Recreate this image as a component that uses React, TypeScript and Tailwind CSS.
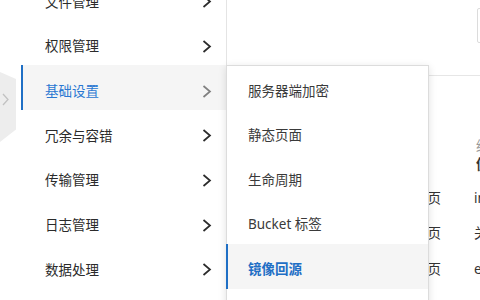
import React from 'react';

const mainItems = ['文件管理', '权限管理', '基础设置', '冗余与容错', '传输管理', '日志管理', '数据处理'];
const subItems = ['服务器端加密', '静态页面', '生命周期', 'Bucket 标签', '镜像回源'];

function Chevron({ className }: { className?: string }) {
    return (
        <svg width="10" height="13" viewBox="0 0 10 13" fill="none" className={className}>
            <polyline points="1.5,1 8,6.5 1.5,12" stroke="currentColor" strokeWidth="1.7" strokeLinejoin="miter" />
        </svg>
    );
}

export default function App() {
    return (
        <div
            className="relative flex w-[480px] h-[300px] overflow-hidden bg-white text-[#333]"
            style={{ fontFamily: '"Noto Sans", "Noto Sans CJK SC", sans-serif' }}
        >
            {/* Main menu */}
            <aside className="w-[227px] shrink-0 border-r border-[#e4e4e4] pl-[21px]">
                <ul className="-mt-[24px]">
                    {mainItems.map((label) => {
                        const active = label === '基础设置';
                        return (
                            <li
                                key={label}
                                className={
                                    active
                                        ? 'flex items-center h-[44.7px] pt-[7px] pl-[22px] pr-[14px] bg-[#f5f5f5] border-l-2 border-[#1f6fc5] text-[#2a78d2] text-[13.5px]'
                                        : 'flex items-center h-[44.7px] pt-[7px] pl-[24px] pr-[14px] text-[13.5px] text-[#2b2b2b]'
                                }
                            >
                                <span className="flex-1">{label}</span>
                                <Chevron className={active ? 'text-[#808080]' : 'text-[#2b2b2b]'} />
                            </li>
                        );
                    })}
                </ul>
            </aside>

            {/* Collapse tab */}
            <div className="absolute left-0 top-[72px] w-[16px] h-[70px] bg-[#ededed] [clip-path:polygon(0_0,100%_10%,100%_82%,0_100%)] flex items-center">
                <svg width="7" height="13" viewBox="0 0 7 13" fill="none" className="ml-[2px] -mt-[16px] text-[#c2c2c2]">
                    <polyline points="1,1 6,6.5 1,12" stroke="currentColor" strokeWidth="1.3" />
                </svg>
            </div>

            {/* Content area behind the flyout */}
            <main className="flex-1 min-w-0 overflow-hidden">
                <div className="h-[76px] border-b border-[#e6e6e6] pl-[250px] pt-[8px]">
                    <div className="w-[80px] h-[35px] border border-[#dcdcdc] rounded-[2px]" />
                </div>
                <div className="pt-[61px] text-[13.5px]">
                    <div className="grid grid-cols-[214px_1fr] leading-[18px] text-[#999]">
                        <span />
                        <span className="pl-[35px] whitespace-nowrap">缓存</span>
                    </div>
                    <div className="grid grid-cols-[214px_1fr] leading-[18px] mb-[7px] font-semibold text-[#333]">
                        <span />
                        <span className="pl-[35px] whitespace-nowrap">值</span>
                    </div>
                    {[
                        ['默认首页', 'index.html'],
                        ['404 页', '关闭'],
                        ['错误页', 'error.html'],
                    ].map(([a, b]) => (
                        <div key={a} className="grid grid-cols-[214px_1fr] h-[35.5px] items-center">
                            <span className="text-right whitespace-nowrap">{a}</span>
                            <span className="pl-[33px] whitespace-nowrap">{b}</span>
                        </div>
                    ))}
                </div>
            </main>

            {/* Submenu flyout */}
            <div className="absolute left-[226px] top-[65px] w-[203px] h-[260px] bg-white border border-[#dcdcdc] shadow-[0_2px_8px_rgba(0,0,0,0.12)]">
                <ul>
                    {subItems.map((label) => {
                        const active = label === '镜像回源';
                        return (
                            <li
                                key={label}
                                className={
                                    active
                                        ? 'flex items-center h-[44.6px] pt-[5px] pl-[20px] -ml-px bg-[#f5f5f5] border-l-2 border-[#1f6fc5] text-[#1f6fc5] font-bold text-[13.5px]'
                                        : 'flex items-center h-[44.6px] pt-[5px] pl-[21px] text-[13.5px] text-[#3a3a3a]'
                                }
                            >
                                {label}
                            </li>
                        );
                    })}
                </ul>
            </div>
        </div>
    );
}
